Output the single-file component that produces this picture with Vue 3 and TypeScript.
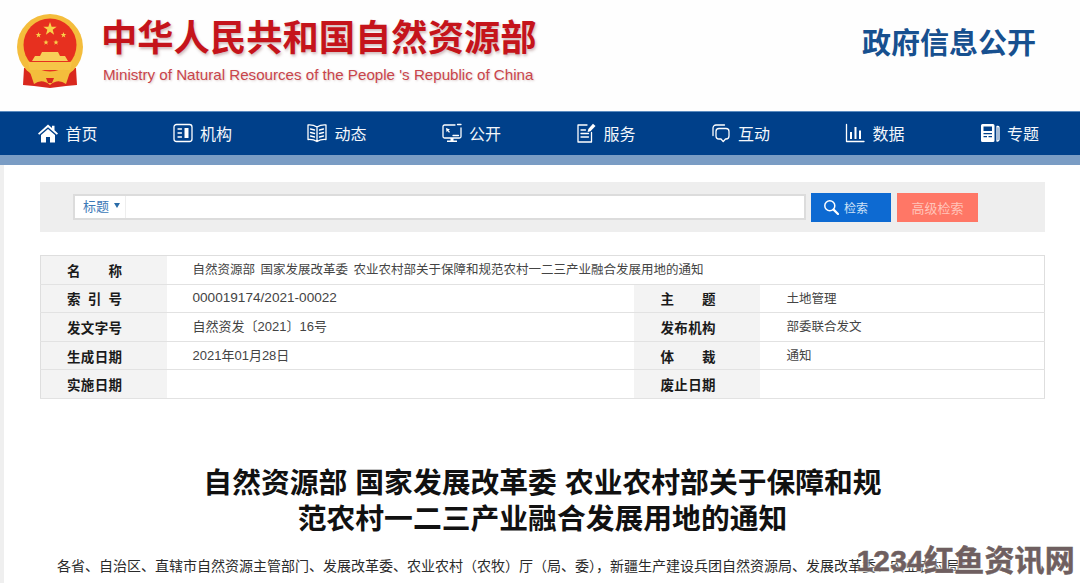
<template>
  <div class="page">
    <header class="top">
      <div class="brand">
        <svg class="emblem" viewBox="0 0 100 100" aria-hidden="true">
          <path d="M24 68 L23 85 L34 86 L50 88 L66 86 L77 85 L76 68 Z" fill="#d9281e" />
          <circle cx="50" cy="47" r="33" fill="#f4bd3c" />
          <circle cx="50" cy="45" r="26.5" fill="#e7301f" />
          <polygon :points="star(50, 29, 7)" fill="#f8d24a" />
          <polygon :points="star(38.5, 35, 3)" fill="#f8d24a" />
          <polygon :points="star(63.5, 35, 3)" fill="#f8d24a" />
          <polygon :points="star(46, 42.5, 2.8)" fill="#f8d24a" />
          <polygon :points="star(56, 42.5, 2.8)" fill="#f8d24a" />
          <path d="M42 52 H58 L60 56 H65 L68 61 H32 L35 56 H40 Z" fill="#f8cf58" />
          <path d="M28 62 H72 L70 70 H30 Z" fill="#f6c548" />
          <path d="M30 72 Q40 66 46 76 L50 73 L54 76 Q60 66 70 72 L66 84 Q58 78 50 85 Q42 78 34 84 Z" fill="#f4bd3c" />
          <path d="M46 78 H54 L52 83 H48 Z" fill="#d9281e" />
        </svg>
        <div class="brand-text">
          <div class="brand-cn">中华人民共和国自然资源部</div>
          <div class="brand-en">Ministry of Natural Resources of the People 's Republic of China</div>
        </div>
      </div>
      <div class="channel">政府信息公开</div>
    </header>

    <nav class="nav">
      <a v-for="item in navItems" :key="item.label" class="nav-item">
        <svg class="nav-icon" viewBox="0 0 20 20" aria-hidden="true">
          <path v-if="item.fill" :d="item.fill" fill="#fff" />
          <path v-if="item.line" :d="item.line" fill="none" stroke="#fff" stroke-width="1.3" stroke-linecap="round" stroke-linejoin="round" />
        </svg>
        <span>{{ item.label }}</span>
      </a>
    </nav>
    <div class="nav-strip"></div>

    <main class="main">
      <section class="search">
        <div class="search-box">
          <span class="search-type">标题 <i class="caret"></i></span>
          <span class="search-input"></span>
        </div>
        <button class="btn btn-search">
          <svg class="search-icon" viewBox="0 0 16 16" aria-hidden="true">
            <circle cx="6.8" cy="6.8" r="5" fill="none" stroke="#fff" stroke-width="1.5" />
            <path d="M10.6 10.6 L15 15" stroke="#fff" stroke-width="2.2" stroke-linecap="round" />
          </svg>
          检索
        </button>
        <button class="btn btn-advanced">高级检索</button>
      </section>

      <table class="meta">
        <colgroup>
          <col class="col-label" />
          <col class="col-left" />
          <col class="col-label" />
          <col />
        </colgroup>
        <tbody>
          <tr>
            <th><span class="label">名称</span></th>
            <td class="small spaced" colspan="3">自然资源部 国家发展改革委 农业农村部关于保障和规范农村一二三产业融合发展用地的通知</td>
          </tr>
          <tr v-for="(row, i) in metaRows" :key="row[0]">
            <th><span class="label">{{ row[0] }}</span></th>
            <td :class="{ wide: i === 0 }">{{ row[1] }}</td>
            <th class="right"><span class="label">{{ row[2] }}</span></th>
            <td class="small right">{{ row[3] }}</td>
          </tr>
        </tbody>
      </table>

      <h1 class="title">自然资源部 国家发展改革委 农业农村部关于保障和规范农村一二三产业融合发展用地的通知</h1>
      <p class="body-text">各省、自治区、直辖市自然资源主管部门、发展改革委、农业农村（农牧）厅（局、委），新疆生产建设兵团自然资源局、发展改革委、农业农村局：</p>
    </main>

    <div class="watermark">1234红鱼资讯网</div>
  </div>
</template>

<script setup lang="ts">
type NavItem = { label: string, fill?: string, line?: string }

const navItems: NavItem[] = [
  {
    label: '首页',
    fill: 'M10 1.5 L14 5 V2.8 H16.5 V7.2 L20 10.4 L18.8 11.8 L10 4.2 L1.2 11.8 L0 10.4 Z M10 6 L17 12 V19.5 H12 V14 H8 V19.5 H3 V12 Z',
  },
  {
    label: '机构',
    fill: 'M11.5 5 H15.5 V15 H11.5 Z',
    line: 'M3.5 1.5 H16.5 A2.5 2.5 0 0 1 19 4 V16 A2.5 2.5 0 0 1 16.5 18.5 H3.5 A2.5 2.5 0 0 1 1 16 V4 A2.5 2.5 0 0 1 3.5 1.5 Z M5 6 H8.5 M5 10 H8.5 M5 14 H8.5',
  },
  {
    label: '动态',
    line: 'M10 4 Q6 1.5 1 2 V16.5 Q6 16 10 18.5 Q14 16 19 16.5 V2 Q14 1.5 10 4 Z M10 4 V18.5 M3.5 6 L7.5 7 M3.5 9.5 L7.5 10.5 M3.5 13 L7.5 14 M16.5 6 L12.5 7 M16.5 9.5 L12.5 10.5 M16.5 13 L12.5 14',
  },
  {
    label: '公开',
    fill: 'M8.5 15 H11.5 V17.5 H15 V19 H5 V17.5 H8.5 Z M4 5 L8 6.5 L6.5 7.2 L8 9 L7 9.8 L5.5 8 L4.6 9.2 Z',
    line: 'M13 2 H2.5 A1.5 1.5 0 0 0 1 3.5 V13.5 A1.5 1.5 0 0 0 2.5 15 H17.5 A1.5 1.5 0 0 0 19 13.5 V5 M15.5 1.5 H19 M11 12.5 H16.5',
  },
  {
    label: '服务',
    fill: 'M17 .8 L19.5 3 L14.5 8.2 L11.6 9 L12.3 6 Z',
    line: 'M11 2 H2 V19 H15.5 V9.5 M5 7 H9.5 M5 10.5 H12.5 M5 14 H12.5',
  },
  {
    label: '互动',
    line: 'M2 12.5 V5 A3 3 0 0 1 5 2 H13.5 M8 5.5 H15 A3 3 0 0 1 18 8.5 V13 A3 3 0 0 1 15 16 H14.5 L12.2 18.6 L10 16 H8 A3 3 0 0 1 5 13 V8.5 A3 3 0 0 1 8 5.5 Z',
  },
  {
    label: '数据',
    fill: 'M5 9 H7 V16 H5 Z M9.5 4 H11.5 V16 H9.5 Z M14 7.5 H16 V16 H14 Z',
    line: 'M1.5 1.5 V18.5 H19',
  },
  {
    label: '专题',
    fill: 'M2.5 1 H13 A1.5 1.5 0 0 1 14.5 2.5 V17.5 A1.5 1.5 0 0 1 13 19 H2.5 A1.5 1.5 0 0 1 1 17.5 V2.5 A1.5 1.5 0 0 1 2.5 1 Z M3.5 3.5 V8 H12 V3.5 Z M3.5 10 V11.2 H12 V10 Z M3.5 13 V14.2 H7 V13 Z M8.5 13 V14.2 H12 V13 Z',
    line: 'M17 3.5 H18 A1 1 0 0 1 19 4.5 V16.5 A1.5 1.5 0 0 1 17.5 18 H17 Z',
  },
]

const metaRows: string[][] = [
  ['索引号', '000019174/2021-00022', '主题', '土地管理'],
  ['发文字号', '自然资发〔2021〕16号', '发布机构', '部委联合发文'],
  ['生成日期', '2021年01月28日', '体裁', '通知'],
  ['实施日期', '', '废止日期', ''],
]

function star (cx: number, cy: number, r: number) {
  const pts: string[] = []
  for (let i = 0; i < 10; i++) {
    const radius = i % 2 === 0 ? r : r * 0.4
    const angle = -Math.PI / 2 + (i * Math.PI) / 5
    pts.push(`${(cx + radius * Math.cos(angle)).toFixed(2)},${(cy + radius * Math.sin(angle)).toFixed(2)}`)
  }
  return pts.join(' ')
}
</script>

<style>
html, body {
  margin: 0;
  overflow: hidden;
  background: #fff;
}
</style>

<style scoped>
.page {
  position: relative;
  height: 583px;
  overflow: hidden;
  background: #efefef;
  font-family: "Liberation Sans", "Noto Sans CJK SC", sans-serif;
  color: #333;
}

.top {
  display: flex;
  align-items: flex-start;
  justify-content: space-between;
  height: 111px;
  background: #fefefe;
  box-sizing: border-box;
}

.brand {
  display: flex;
  align-items: flex-start;
}

.emblem {
  width: 100px;
  height: 100px;
  flex: none;
}

.brand-text {
  margin-left: 3px;
  padding-top: 17px;
}

.brand-cn {
  margin-left: -2px;
  font-size: 36.3px;
  line-height: 44px;
  font-weight: 700;
  color: #c5141b;
  white-space: nowrap;
  text-shadow: 1px 2px 3px rgba(120, 60, 60, 0.35);
}

.brand-en {
  margin-top: 4px;
  font-size: 15.15px;
  line-height: 20px;
  color: #c9444a;
  white-space: nowrap;
  text-shadow: 1px 1px 2px rgba(120, 60, 60, 0.25);
}

.channel {
  margin: 24px 44px 0 0;
  font-size: 29px;
  line-height: 40px;
  font-weight: 700;
  color: #17508f;
}

.nav {
  display: flex;
  height: 44px;
  padding-left: 38px;
  background: #00408a;
  box-shadow: inset 0 1px 0 #5c8cc0;
}

.nav-item {
  display: flex;
  align-items: center;
  gap: 7.5px;
  width: 134.5px;
  flex: none;
  color: #f4f7fb;
  font-size: 16px;
}

.nav-icon {
  width: 20px;
  height: 20px;
  flex: none;
}

.nav-strip {
  height: 10px;
  background: #7a9cc4;
}

.main {
  margin-left: 4px;
  height: 418px;
  padding: 17px 35px 0 36px;
  background: #fff;
}

.search {
  display: flex;
  align-items: center;
  height: 50px;
  padding-left: 33px;
  background: #eeeeee;
}

.search-box {
  display: flex;
  width: 733px;
  height: 26px;
  box-sizing: border-box;
  border: 2px solid #dcdcdc;
  background: #fff;
}

.search-type {
  display: flex;
  align-items: center;
  gap: 5px;
  width: 51px;
  padding: 0 0 3px 8px;
  box-sizing: border-box;
  border-right: 1px solid #eeeeee;
  font-size: 13px;
  color: #3c7ab8;
}

.caret {
  width: 0;
  height: 0;
  border-left: 3px solid transparent;
  border-right: 3px solid transparent;
  border-top: 5px solid #2a6ca8;
}

.btn {
  height: 29px;
  padding: 0;
  border: 0;
  font-family: inherit;
  font-size: 13px;
}

.btn-search {
  display: flex;
  align-items: center;
  gap: 5px;
  width: 80px;
  margin-left: 5px;
  padding-left: 12px;
  background: #0d6ad2;
  color: #cfe2f7;
  font-size: 12px;
}

.search-icon {
  width: 16px;
  height: 16px;
}

.btn-advanced {
  width: 81px;
  margin-left: 6px;
  background: #ff7766;
  color: #ffc4ba;
}

.meta {
  width: 1005px;
  margin-top: 23px;
  border-collapse: collapse;
  table-layout: fixed;
  border: 1px solid #dedede;
  font-size: 13px;
}

.col-label {
  width: 126px;
}

.col-left {
  width: 467px;
}

.meta tr {
  height: 28.6px;
  border-bottom: 1.5px solid #e2e2e2;
}

.meta th,
.meta td {
  padding: 0 0 2px 26px;
  text-align: left;
  vertical-align: middle;
}

.meta th {
  padding-bottom: 0;
  background: #f3f3f3;
  color: #1a1a1a;
  font-weight: 700;
}

.meta td {
  color: #444;
}

.meta .right {
  padding-left: 27px;
}

.meta td.small {
  font-size: 12.5px;
}

.meta td.spaced {
  word-spacing: 2px;
}

.meta td.wide {
  font-size: 13.6px;
}

.label {
  display: inline-block;
  width: 55px;
  font-size: 13.5px;
  text-align-last: justify;
}

.title {
  width: 690px;
  margin: 66px auto 0;
  text-align: center;
  font-size: 28.8px;
  line-height: 36px;
  font-weight: 700;
  color: #111;
}

.body-text {
  margin: 15px 0 0;
  padding-left: 17px;
  font-size: 14px;
  line-height: 28px;
  color: #2a2a2a;
}

.watermark {
  position: absolute;
  right: 5px;
  bottom: 5px;
  font-size: 30px;
  line-height: 34px;
  font-weight: 700;
  letter-spacing: 0.2px;
  color: #6f5f60;
  white-space: nowrap;
  -webkit-text-stroke: 0.5px #6f5f60;
  text-shadow: 0 0 3px #fff, 0 0 3px #fff;
}
</style>
